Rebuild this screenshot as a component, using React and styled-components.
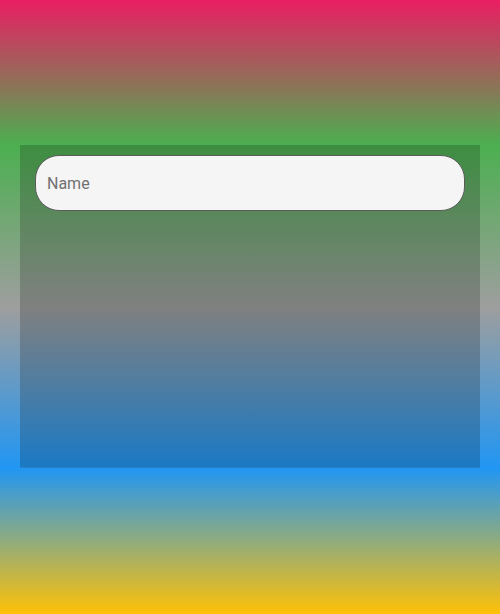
import styled, { createGlobalStyle } from "styled-components";

const GlobalStyle = createGlobalStyle`
  html, body {
    margin: 0;
    padding: 0;
  }
  body {
    font-family: Roboto, "Noto Sans", sans-serif;
  }
`;

export default function App() {
  return (
    <>
      <GlobalStyle />
      <Page>
        <Panel>
          <NameInput type="text" placeholder="Name" />
        </Panel>
      </Page>
    </>
  );
}

const Page = styled.div`
  height: 614px;
  box-sizing: border-box;
  padding: 145px 20px 0;
  background: linear-gradient(
    to bottom,
    #e91e63 0px,
    #4caf50 145px,
    #9e9e9e 307px,
    #2196f3 468px,
    #ffc107 614px
  );
`;

const Panel = styled.div`
  height: 323px;
  box-sizing: border-box;
  padding: 10px 15px;
  background: rgba(0, 0, 0, 0.19);
  border-bottom: 1px solid rgba(255, 255, 255, 0.06);
`;

const NameInput = styled.input`
  display: block;
  width: 100%;
  height: 56px;
  box-sizing: border-box;
  padding: 0 11px;
  border: 1px solid #5a5a5a;
  border-radius: 24px;
  background: #f5f5f5;
  font-family: Roboto, "Noto Sans", sans-serif;
  font-size: 16px;
  color: #333;
  outline: none;

  &::placeholder {
    color: #707070;
  }
`;
